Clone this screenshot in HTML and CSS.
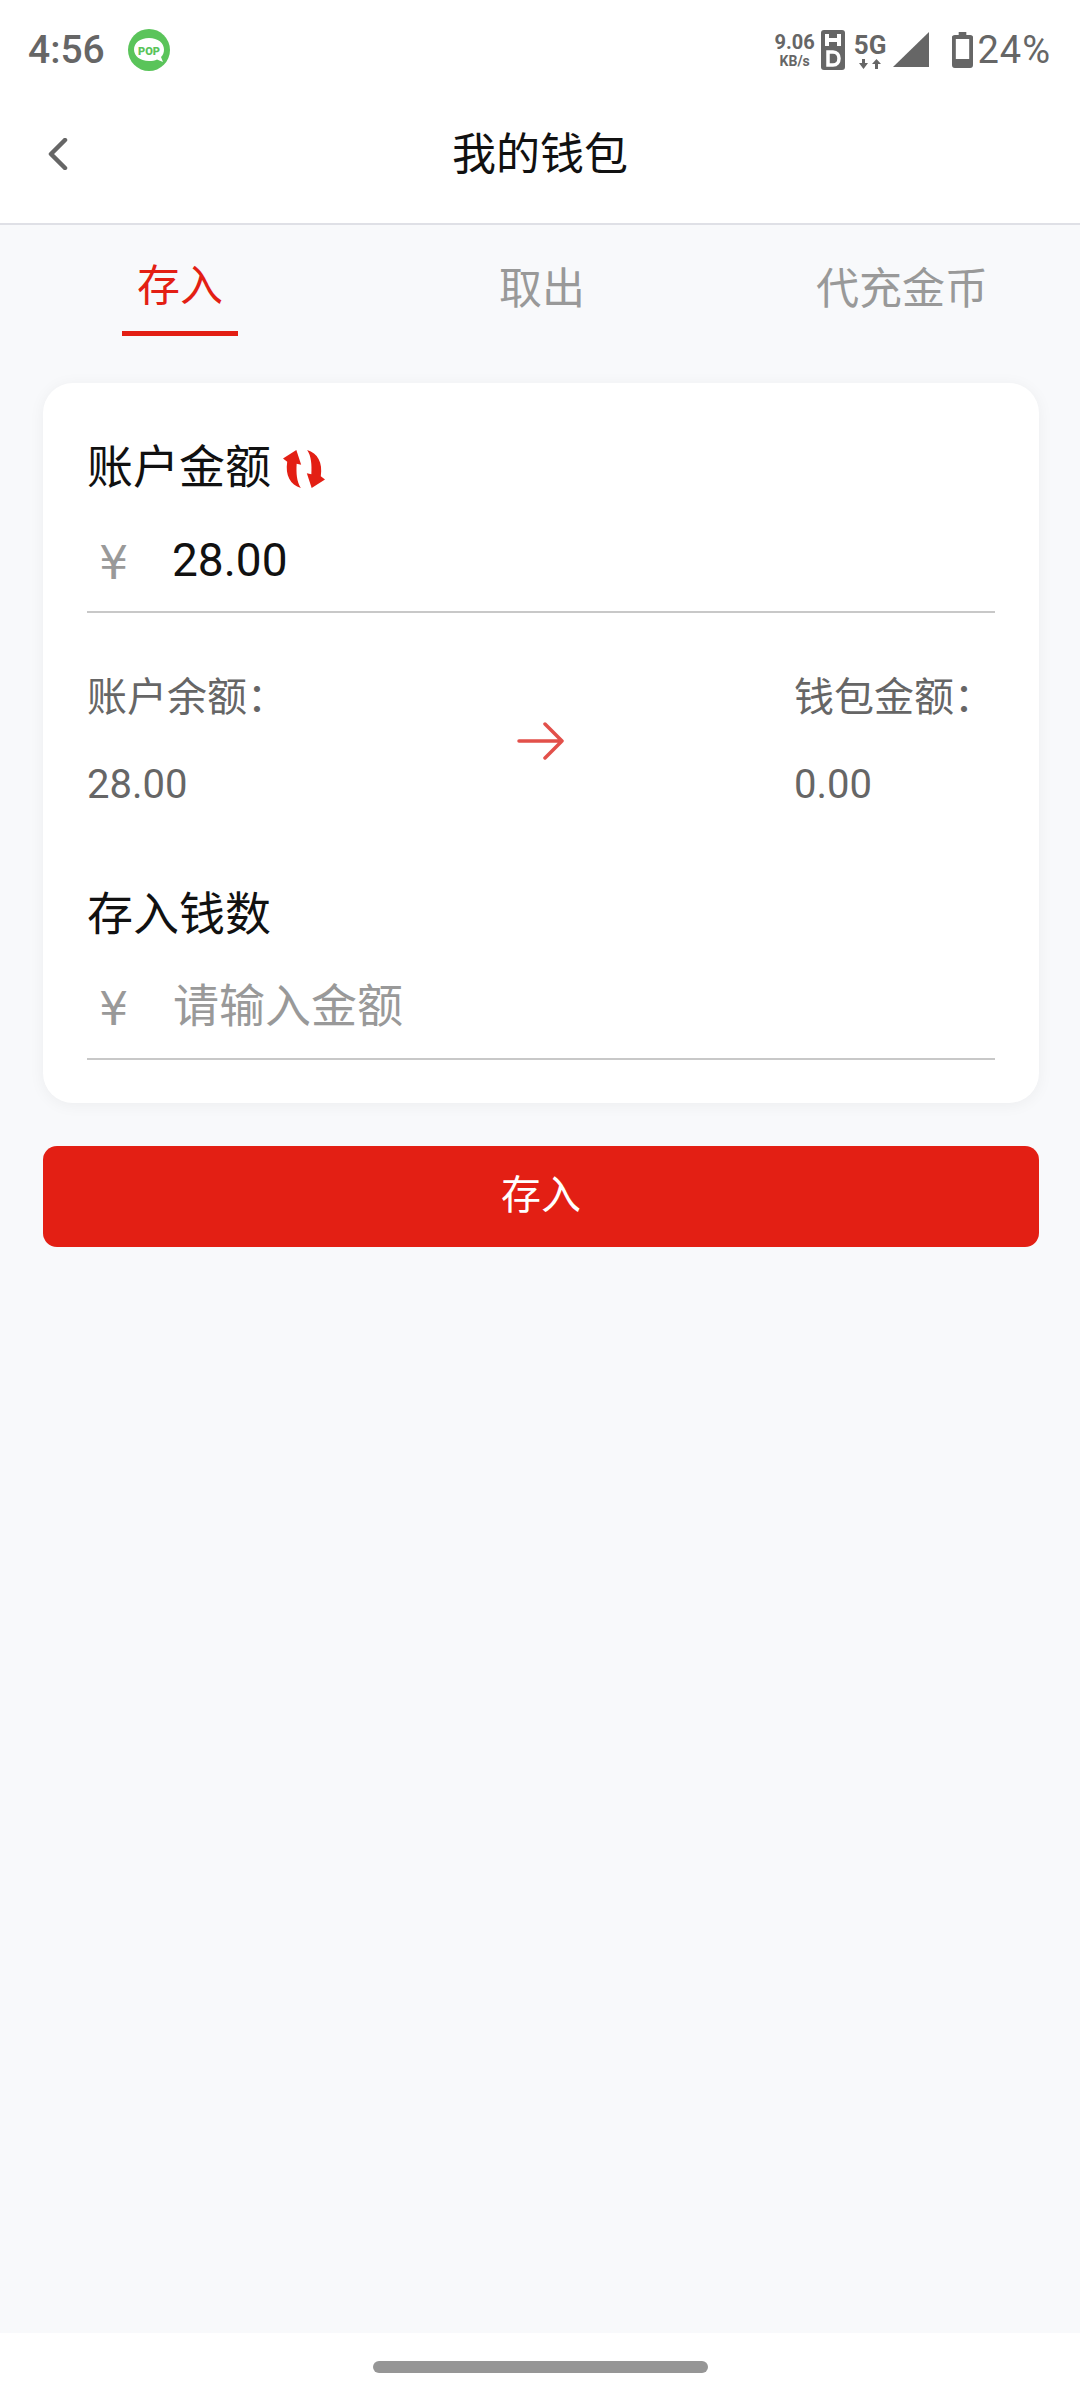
FILE: index.html
```html
<!DOCTYPE html>
<html lang="zh-CN">
<head>
    <meta charset="UTF-8">
    <meta name="viewport" content="width=device-width, initial-scale=1.0">
    <title>我的钱包</title>
    <link rel="stylesheet" href="styles.css">
</head>
<body>
    <div class="page">
        <header class="top">
            <div class="status-bar">
                <div class="status-left">
                    <span class="clock">4:56</span>
                    <svg class="pop-icon" width="42" height="42" viewBox="0 0 42 42">
                        <circle cx="21" cy="21" r="21" fill="#5ac45a"/>
                        <path d="M21 9C12 9 6 14 6 20.500S12 32 21 32C24 32 27 31.500 29 30.500L35 33L33 28C35 26 36 23.500 36 20.500C36 14 30 9 21 9Z" fill="#fff"/>
                        <text x="21" y="25.500" text-anchor="middle" class="pop-text">POP</text>
                    </svg>
                </div>
                <div class="status-right">
                    <div class="net-speed">
                        <span class="net-num">9.06</span>
                        <span class="net-unit">KB/s</span>
                    </div>
                    <svg class="hd-icon" width="24" height="40" viewBox="0 0 24 40">
                        <rect width="24" height="40" rx="3" fill="#666"/>
                        <path d="M6 4V16M18 4V16M6 10H18" stroke="#fff" stroke-width="4" fill="none"/>
                        <path d="M7 22V35H12C16 35 18 32 18 28.500S16 22 12 22Z" stroke="#fff" stroke-width="3.500" fill="none"/>
                    </svg>
                    <div class="five-g">
                        <span class="five-g-text">5G</span>
                        <svg width="22" height="11" viewBox="0 0 22 11">
                            <path d="M3 0H6V4H9L4.500 10L0 4H3ZM16 10H19V5H22L17.500 0L13 5H16Z" fill="#666"/>
                        </svg>
                    </div>
                    <svg class="signal-icon" width="36" height="36" viewBox="0 0 36 36">
                        <path d="M36 0V35H0Z" fill="#666"/>
                    </svg>
                    <svg class="battery-icon" width="21" height="36" viewBox="0 0 22 36" preserveAspectRatio="none">
                        <path d="M7 0H15V3H19C21 3 22 4 22 5V33C22 35 21 36 19 36H3C1 36 0 35 0 33V5C0 4 1 3 3 3H7Z" fill="#666"/>
                        <rect x="4" y="7" width="14" height="20" fill="#fff"/>
                    </svg>
                    <span class="battery-text">24%</span>
                </div>
            </div>
            <nav class="nav-bar">
                <svg class="back-icon" width="20" height="32" viewBox="0 0 20 32">
                    <path d="M17 2L3 16L17 30" stroke="#666" stroke-width="4.500" fill="none" stroke-linecap="round" stroke-linejoin="round"/>
                </svg>
                <h1 class="nav-title">我的钱包</h1>
            </nav>
        </header>

        <main class="content">
            <div class="tabs">
                <div class="tab tab-active">存入</div>
                <div class="tab">取出</div>
                <div class="tab">代充金币</div>
            </div>

            <section class="card">
                <div class="field-title">
                    账户金额
                    <svg class="refresh-icon" width="42" height="38" viewBox="0 0 40 36">
                        <path d="M0 8L12.700 0L17.300 14L13 13C12.500 22 13 30 17 36C7 33 2 24 4 11Z" fill="#e31f14"/>
                        <path d="M40 28L27.300 36L22.700 22L27 23C27.500 14 27 6 23 0C33 3 38 12 36 25Z" fill="#e31f14"/>
                    </svg>
                </div>
                <div class="amount-row">
                    <span class="yen">¥</span>
                    <span class="amount-value">28.00</span>
                </div>

                <div class="transfer">
                    <div class="transfer-col">
                        <div class="transfer-label">账户余额：</div>
                        <div class="transfer-value">28.00</div>
                    </div>
                    <svg class="arrow-icon" width="48" height="38" viewBox="0 0 48 38">
                        <path d="M2 19H45M28 2L45 19L28 36" stroke="#e2504a" stroke-width="3.500" fill="none" stroke-linecap="round" stroke-linejoin="round"/>
                    </svg>
                    <div class="transfer-col">
                        <div class="transfer-label">钱包金额：</div>
                        <div class="transfer-value">0.00</div>
                    </div>
                </div>

                <div class="field-title">存入钱数</div>
                <div class="amount-row amount-row-input">
                    <span class="yen">¥</span>
                    <span class="placeholder">请输入金额</span>
                </div>
            </section>

            <button class="submit-button">存入</button>
        </main>

        <footer class="gesture-bar">
            <div class="gesture-handle"></div>
        </footer>
    </div>
</body>
</html>
```

FILE: styles.css
```css
* {
    box-sizing: border-box;
}

body {
    margin: 0;
    font-family: "Roboto", "Noto Sans CJK SC", sans-serif;
    background: #f8f9fb;
}

.page {
    display: flex;
    flex-direction: column;
    height: 2400px;
}

/* Status bar and title */
.top {
    background: #fff;
    border-bottom: 2px solid #dfe0e6;
    height: 225px;
}

.status-bar {
    display: flex;
    justify-content: space-between;
    align-items: center;
    height: 100px;
    padding: 0 29px 0 28px;
    color: #666;
}

.status-left {
    display: flex;
    align-items: center;
    gap: 23px;
}

.clock {
    font-size: 39px;
    font-weight: 500;
}

.pop-text {
    font-family: "Roboto", sans-serif;
    font-size: 11px;
    font-weight: 900;
    fill: #5ac45a;
}

.status-right {
    display: flex;
    align-items: center;
}

.net-speed {
    display: flex;
    flex-direction: column;
    align-items: center;
    margin-right: 6px;
    font-weight: 700;
}

.net-num {
    font-size: 20px;
    line-height: 22px;
}

.net-unit {
    font-size: 14px;
    line-height: 16px;
}

.five-g {
    display: flex;
    flex-direction: column;
    align-items: center;
    margin: 0 7px 0 9px;
}

.five-g-text {
    font-size: 26px;
    font-weight: 700;
    line-height: 28px;
}

.signal-icon {
    margin-right: 23px;
}

.battery-icon {
    margin-right: 4px;
}

.battery-text {
    font-size: 38px;
    letter-spacing: 1px;
}

.nav-bar {
    position: relative;
    display: flex;
    justify-content: center;
    align-items: center;
    height: 123px;
    padding-bottom: 22px;
}

.back-icon {
    position: absolute;
    left: 48px;
    top: 38px;
}

.nav-title {
    margin: 0;
    font-size: 44px;
    font-weight: 400;
    color: #111;
}

/* Tabs */
.content {
    flex: 1;
    display: flex;
    flex-direction: column;
    padding: 0 41px 0 43px;
}

.tabs {
    display: grid;
    grid-template-columns: repeat(3, 360px);
    justify-content: center;
    height: 111px;
    margin: 0 -41px 47px -43px;
}

.tab {
    justify-self: center;
    height: 111px;
    padding: 34px 13px 0 17px;
    font-size: 43px;
    line-height: 60px;
    color: #999;
}

.tab-active {
    padding: 31px 15px 0;
    color: #e31f14;
    border-bottom: 5px solid #e31f14;
}

/* Card */
.card {
    height: 720px;
    padding: 49px 44px 0;
    background: #fff;
    border-radius: 30px;
    box-shadow: 0 2px 16px rgba(0, 0, 0, 0.05);
}

.field-title {
    display: flex;
    align-items: center;
    gap: 12px;
    height: 62px;
    font-size: 46px;
    color: #111;
}

.refresh-icon {
    margin-top: 12px;
}

.amount-row {
    display: flex;
    align-items: center;
    height: 119px;
    padding-top: 15px;
    border-bottom: 2px solid #c8c8c8;
    font-size: 46px;
}

.amount-row-input {
    padding-top: 4px;
}

.amount-row-input .yen {
    margin-top: 14px;
}

.yen {
    width: 85px;
    margin-top: 5px;
    padding-left: 12px;
    font-family: "DejaVu Sans", sans-serif;
    font-size: 46px;
    color: #999;
}

.amount-value {
    color: #111;
}

.placeholder {
    padding-left: 1px;
    color: #999;
}

.transfer {
    display: flex;
    justify-content: space-between;
    align-items: center;
    height: 266px;
    padding: 56px 0 65px;
}

.transfer-col {
    width: 201px;
    font-size: 40px;
    line-height: 58px;
    color: #666;
}

.transfer-label {
    height: 87px;
}

.arrow-icon {
    margin-bottom: 2px;
}

.submit-button {
    height: 101px;
    margin-top: 43px;
    padding-bottom: 10px;
    border: none;
    border-radius: 14px;
    background: #e31f14;
    color: #fff;
    font-family: inherit;
    font-size: 40px;
}

/* Gesture handle */
.gesture-bar {
    display: flex;
    justify-content: center;
    align-items: center;
    height: 67px;
    background: #fff;
}

.gesture-handle {
    width: 335px;
    height: 12px;
    border-radius: 6px;
    background: #969696;
}
```
